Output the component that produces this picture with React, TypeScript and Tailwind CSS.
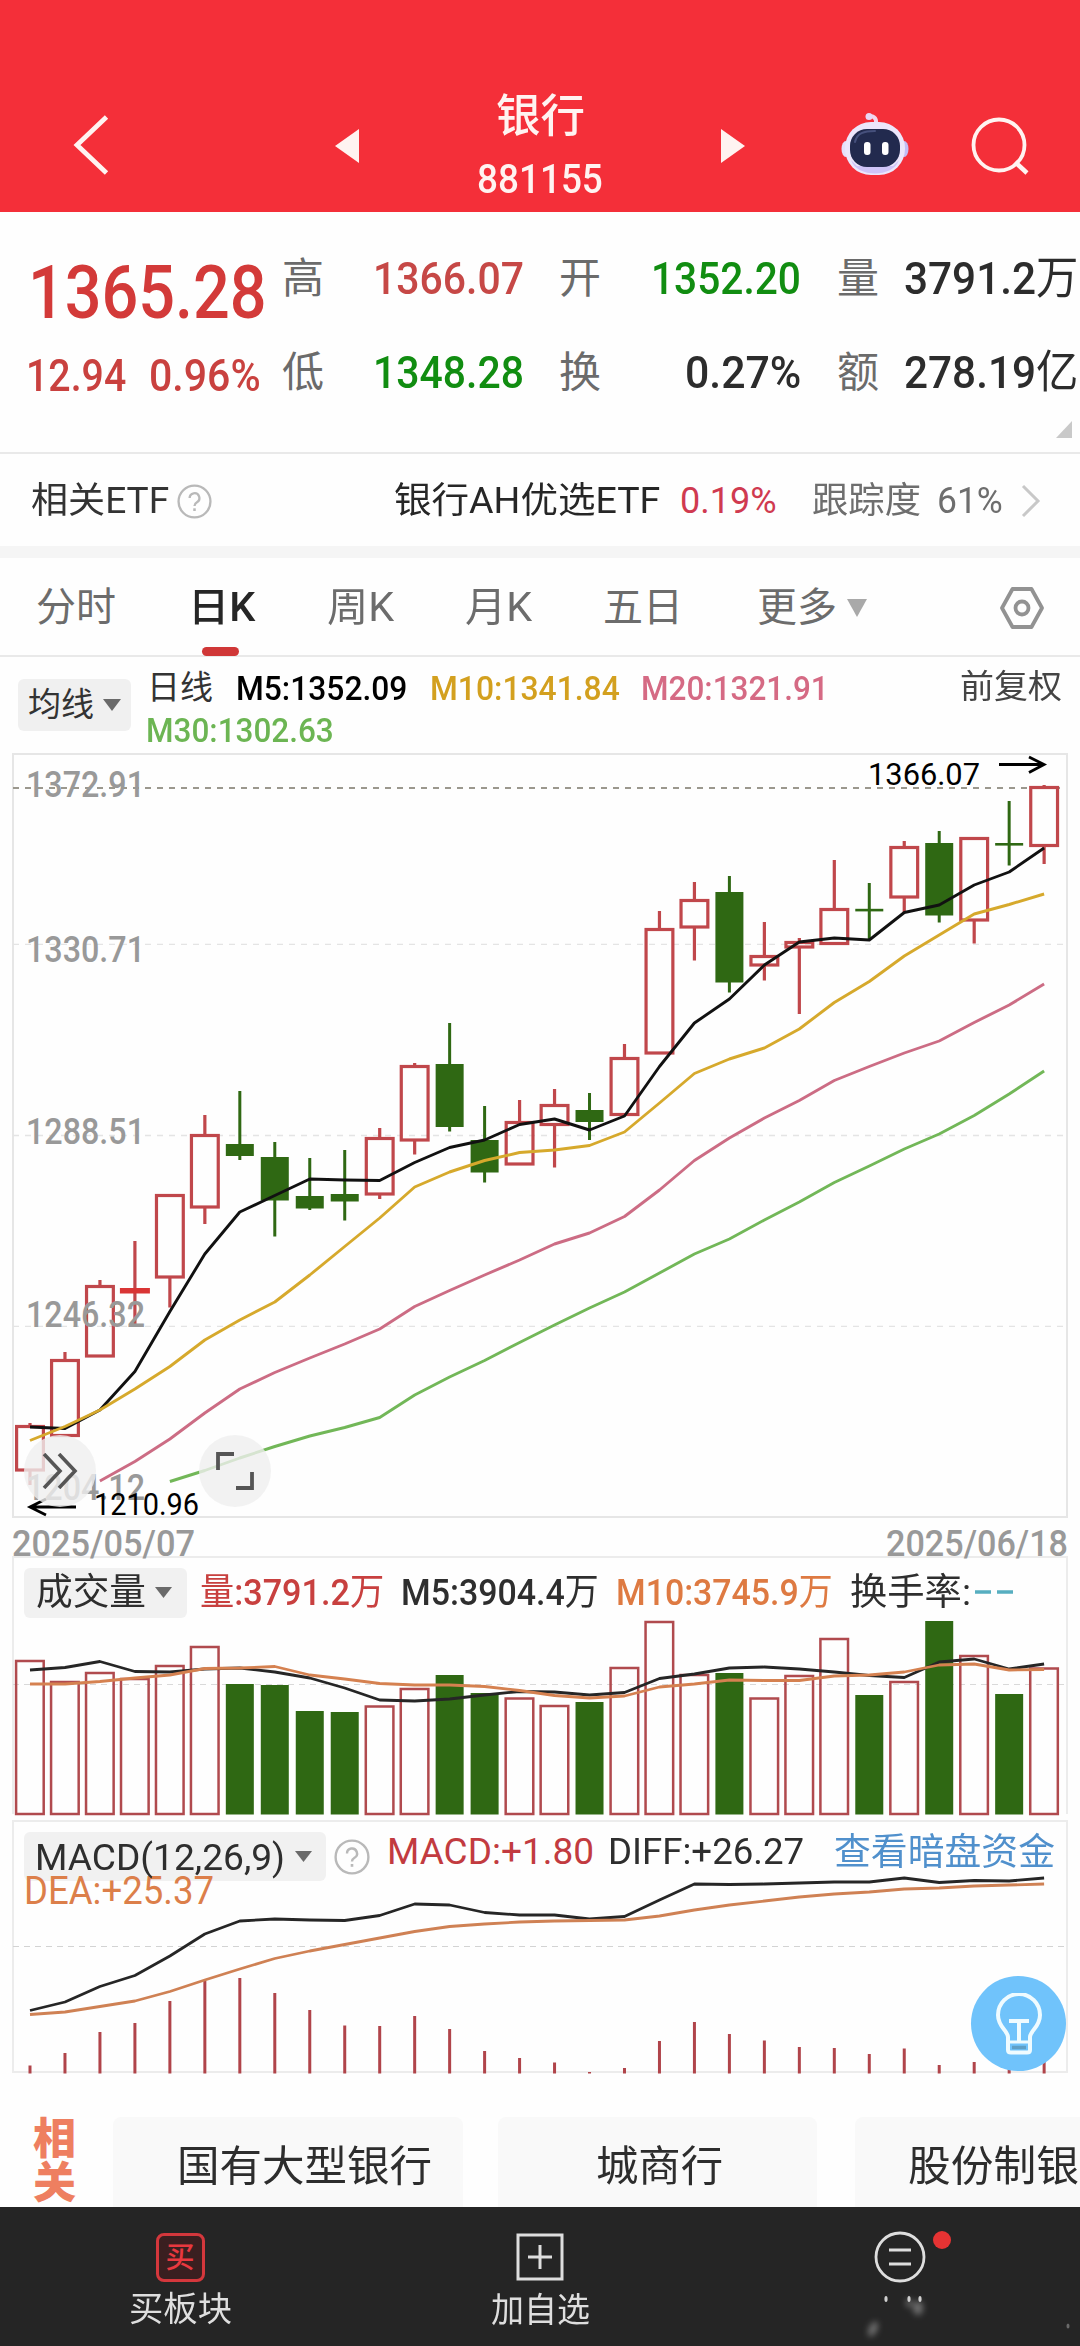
import { useLayoutEffect, useRef, useState } from "react";
import type { ReactNode } from "react";

type Candle = {
  up: boolean;
  top: number;
  bottom: number;
  high: number;
  low: number;
  volume: number;
  macd: number;
};

const RED = "#c0474b";
const GREEN = "#2f6813";
const FONT = 'Roboto, "Noto Sans CJK SC", sans-serif';

// [up, body top, body bottom, high, low, volume top, macd top]
const rows: [number, number, number, number, number, number, number][] = [
  [1, 1425, 1471.5, 1423, 1485, 1660, 2065.5],
  [1, 1359, 1437, 1352, 1437, 1681, 2053],
  [1, 1285, 1357.5, 1280, 1357, 1672, 2032],
  [1, 1288, 1293.5, 1241, 1324, 1678, 2023],
  [1, 1194, 1278.5, 1194, 1307.5, 1665, 2001],
  [1, 1134, 1208.5, 1115, 1224, 1646, 1981],
  [0, 1144, 1156, 1091, 1160, 1684, 1978],
  [0, 1157, 1200.5, 1142, 1236.5, 1685, 1993],
  [0, 1196, 1208.5, 1158, 1210, 1711, 2010],
  [0, 1194, 1201.5, 1150, 1220.5, 1712, 2025.5],
  [1, 1137, 1195.5, 1128, 1199, 1705.5, 2026],
  [1, 1065, 1141.5, 1063, 1154.5, 1688, 2016],
  [0, 1064, 1127, 1023, 1131.5, 1675, 2029],
  [0, 1140, 1172.5, 1106, 1182.5, 1693, 2051],
  [1, 1121, 1165.5, 1100, 1165, 1697.5, 2058],
  [1, 1104, 1126, 1089, 1167.5, 1705, 2062.5],
  [0, 1110, 1122, 1093, 1140, 1702, 2072],
  [1, 1057, 1116, 1044, 1116, 1667, 2068],
  [1, 928, 1054.5, 911, 1054, 1621, 2041],
  [1, 899, 928.5, 882, 960.5, 1674, 2022],
  [0, 892, 982.5, 876, 992.5, 1673, 2034],
  [1, 955, 966.5, 922, 980.5, 1697.5, 2040.5],
  [1, 941, 948.5, 938, 1014, 1675, 2047],
  [1, 908, 945, 860, 945, 1638, 2048],
  [0, 908.8, 911.4, 883, 939, 1695, 2054],
  [1, 846, 898.5, 841, 912.5, 1681, 2048.5],
  [0, 843, 915.5, 831, 922.5, 1621, 2065],
  [1, 837, 921.5, 837, 943.5, 1655, 2062],
  [0, 843, 845.6, 801, 865.5, 1694, 2066],
  [1, 786, 847, 785, 864, 1667.5, 2060.5],
];

const candles: Candle[] = rows.map(([up, top, bottom, high, low, volume, macd]) => ({
  up: up === 1,
  top,
  bottom,
  high,
  low,
  volume,
  macd,
}));

const ma5 = [
  1427, 1428.5, 1410, 1371.5, 1311.5, 1254, 1212, 1195.5, 1179, 1180, 1180.5, 1162.5, 1147.5, 1140, 1124.5,
  1119, 1130, 1116, 1066.5, 1023, 999, 965, 942, 938, 940, 912.5, 905, 885, 872, 848,
];
const ma10 = [
  1440.5, 1426.5, 1410, 1389, 1366.5, 1340, 1320, 1302, 1275, 1246.5, 1218, 1187, 1172, 1160.5, 1152.5,
  1150, 1145.5, 1132, 1103, 1073.5, 1059, 1048, 1029, 1002.5, 981.5, 956, 935, 914, 904.5, 894,
];
const ma20 = [
  1481, 1461.5, 1439, 1413, 1389, 1372.5, 1358, 1344, 1329, 1306.5, 1290.5, 1275, 1260, 1244, 1233,
  1216.5, 1190, 1160.5, 1138, 1118, 1100.5, 1080.5, 1066.5, 1053, 1041, 1022.5, 1005, 984,
];
const ma30 = [
  1481.5, 1470.5, 1458, 1446.5, 1436, 1427.5, 1417.5, 1395, 1377, 1360.5, 1342.5, 1325, 1308, 1292, 1273,
  1254, 1239, 1220, 1202, 1182.5, 1166, 1149, 1134, 1115.5, 1094, 1071,
];
const vol5 = [
  1670, 1667.5, 1661.5, 1671.5, 1672, 1669, 1668, 1672, 1678, 1688, 1700, 1701, 1699, 1695, 1691.5,
  1692, 1695, 1692.5, 1678.5, 1674, 1668, 1667, 1669, 1672, 1675.5, 1677.5, 1662, 1659, 1669, 1664,
];
const vol10 = [
  1684, 1684, 1681.5, 1678, 1675, 1668.5, 1668, 1666.5, 1675, 1679, 1683.5, 1685, 1685, 1686.5, 1690.5,
  1695.5, 1698, 1696, 1687, 1684, 1680, 1680.5, 1680.5, 1676, 1675, 1672, 1665, 1664, 1670, 1669.5,
];
const diff = [
  2010.5, 2002, 1986.5, 1975.5, 1956, 1934, 1921, 1919, 1920, 1920.5, 1915.5, 1904, 1905, 1912.5, 1915,
  1915, 1919, 1916.5, 1900, 1884, 1884.5, 1884, 1883, 1882, 1882, 1878, 1882.5, 1880.5, 1881, 1878,
];
const dea = [
  2014.5, 2012, 2006.5, 2001, 1991.5, 1980, 1969, 1958.5, 1951, 1944.5, 1938, 1931.5, 1926.5, 1924, 1922,
  1921, 1920.5, 1920, 1916, 1910, 1905, 1901, 1897, 1894, 1892, 1889, 1888, 1886, 1885, 1884,
];

const cx = (i: number) => 30 + i * 34.97;

const points = (values: number[], start = 0) =>
  values.map((y, i) => `${cx(i + start).toFixed(1)},${y}`).join(" ");

// Squeezes a label horizontally so it takes exactly `w` pixels
function Fit({ w, className = "", children }: { w: number; className?: string; children: ReactNode }) {
  const ref = useRef<HTMLSpanElement>(null);
  const [scale, setScale] = useState(1);

  useLayoutEffect(() => {
    if (ref.current) setScale(w / ref.current.offsetWidth);
  }, [w]);

  return (
    <span className={`block shrink-0 whitespace-nowrap ${className}`} style={{ width: w }}>
      <span ref={ref} className="inline-block origin-left" style={{ transform: `scaleX(${scale})` }}>
        {children}
      </span>
    </span>
  );
}

function Caret({ className }: { className: string }) {
  return (
    <svg viewBox="0 0 18 12" preserveAspectRatio="none" className={className} fill="currentColor">
      <path d="M0 0H18L9 12Z" />
    </svg>
  );
}

function HelpIcon({ className }: { className: string }) {
  return (
    <svg viewBox="0 0 36 36" className={className} fill="none" stroke="#b9b9b9">
      <circle cx="18" cy="18" r="16.4" strokeWidth="2.4" />
      <path d="M13 14.5a5 5 0 1 1 7.5 4.3c-1.7 1-2.5 1.8-2.5 3.7" strokeWidth="2.4" />
      <path d="M18 25v2.8" strokeWidth="2.6" />
    </svg>
  );
}

function Robot() {
  return (
    <svg viewBox="0 0 68 64" className="h-[64px] w-[68px]">
      <path d="M35 12C36 5 31 3 27 5" fill="none" stroke="#f3d5ea" strokeWidth="4" strokeLinecap="round" />
      <circle cx="28" cy="4.5" r="3.500" fill="#e9d7f5" />
      <ellipse cx="5" cy="37" rx="4.500" ry="8" fill="#e4e0fb" />
      <ellipse cx="63" cy="37" rx="4.500" ry="8" fill="#c3bdf5" />
      <rect x="4" y="10" width="60" height="53" rx="26" fill="#ece6fb" />
      <path d="M10 48c6 18 42 18 48 0l-6 6H16z" fill="#cfc4f8" />
      <rect x="9" y="17" width="50" height="38" rx="17" fill="#222a4e" />
      <path d="M14 30c2-9 9-11 20-11" fill="none" stroke="#46507c" strokeWidth="2" strokeLinecap="round" />
      <rect x="23" y="30" width="6.500" height="13" rx="3" fill="#fff" />
      <rect x="41" y="30" width="6.500" height="13" rx="3" fill="#fff" />
    </svg>
  );
}

function Header() {
  return (
    <header className="flex h-[212px] items-center bg-[#f42f39] pt-[79px] text-[#fff3f1]">
      <svg viewBox="0 0 38 62" className="ml-[71px] h-[62px] w-[38px]" fill="none" stroke="currentColor" strokeWidth="4.8">
        <path d="M35.500 2L6 30L35.500 58" />
      </svg>

      <svg viewBox="0 0 24 34" className="ml-[226px] h-[34px] w-6" fill="currentColor">
        <path d="M24 0V34L0 17Z" />
      </svg>

      <div className="flex h-full w-[362px] flex-col items-center pt-[10px]">
        <Fit w={89} className="h-14 text-[45px] font-medium leading-[56px]">
          银行
        </Fit>
        <Fit w={126} className="mt-[12px] h-11 text-[41px] font-medium leading-[44px]">
          881155
        </Fit>
      </div>

      <svg viewBox="0 0 24 34" className="h-[34px] w-6" fill="currentColor">
        <path d="M0 0V34L24 17Z" />
      </svg>

      <div className="-mt-[3px] ml-[96px]">
        <Robot />
      </div>

      <svg viewBox="0 0 60 60" className="ml-[62px] h-[60px] w-[60px]" fill="none" stroke="currentColor" strokeWidth="3.800">
        <circle cx="28" cy="29" r="25.500" />
        <path d="M44 46L56 57" strokeWidth="4.500" />
      </svg>
    </header>
  );
}

function Quote() {
  const label = "h-12 text-[42px] leading-[48px] text-[#6b6b6b]";
  const value = "h-12 text-[45px] leading-[48px] font-medium";

  return (
    <section className="relative flex h-[242px] border-b-2 border-[#e9e9e9]">
      <div className="w-[282px] shrink-0 pt-[48px] text-[#d33a39]">
        <Fit w={239} className="ml-[28px] h-16 text-[75px] font-medium leading-[64px]">
          1365.28
        </Fit>
        <div className="mt-8 flex text-[#c9413f]">
          <Fit w={100} className="ml-[26px] h-10 text-[44px] font-medium leading-[40px]">
            12.94
          </Fit>
          <Fit w={112} className="ml-[23px] h-10 text-[44px] font-medium leading-[40px]">
            0.96%
          </Fit>
        </div>
      </div>

      <div className="pt-[43px]">
        <div className="flex">
          <Fit w={42} className={label}>高</Fit>
          <Fit w={151} className={`ml-[49px] text-[#c64846] ${value}`}>1366.07</Fit>
          <Fit w={42} className={`ml-[35px] ${label}`}>开</Fit>
          <Fit w={150} className={`ml-[50px] text-[#118d11] ${value}`}>1352.20</Fit>
          <Fit w={42} className={`ml-[36px] ${label}`}>量</Fit>
          <Fit w={174} className={`ml-[25px] text-[#2c2c2c] ${value}`}>
            3791.2<span className="font-normal">万</span>
          </Fit>
        </div>
        <div className="mt-[46px] flex">
          <Fit w={42} className={label}>低</Fit>
          <Fit w={151} className={`ml-[49px] text-[#118d11] ${value}`}>1348.28</Fit>
          <Fit w={42} className={`ml-[35px] ${label}`}>换</Fit>
          <Fit w={116} className={`ml-[84px] text-[#2c2c2c] ${value}`}>0.27%</Fit>
          <Fit w={42} className={`ml-[36px] ${label}`}>额</Fit>
          <Fit w={174} className={`ml-[25px] text-[#2c2c2c] ${value}`}>
            278.19<span className="font-normal">亿</span>
          </Fit>
        </div>
      </div>

      <svg viewBox="0 0 16 17" className="absolute bottom-[14px] right-2 h-[17px] w-4" fill="#c9c9c9">
        <path d="M16 0V17H0Z" />
      </svg>
    </section>
  );
}

function RelatedEtf() {
  return (
    <section className="flex h-[92px] items-center pt-[2px] text-[36px] leading-[44px] text-[#333]">
      <Fit w={138} className="ml-[31px]">相关ETF</Fit>
      <HelpIcon className="ml-[8px] h-[35px] w-[35px]" />
      <Fit w={266} className="ml-[182px] text-[#262626]">银行AH优选ETF</Fit>
      <Fit w={97} className="ml-[20px] text-[#d03a50]">0.19%</Fit>
      <Fit w={109} className="ml-[35px] text-[#6e6e6e]">跟踪度</Fit>
      <Fit w={66} className="ml-[16px] text-[#6e6e6e]">61%</Fit>
      <svg viewBox="0 0 20 34" className="ml-[18px] h-[34px] w-5" fill="none" stroke="#c8c8c8" strokeWidth="3">
        <path d="M2 2L17 17L2 32" />
      </svg>
    </section>
  );
}

function Tabs() {
  return (
    <nav className="relative flex h-[99px] items-center border-b-2 border-[#e9e9e9] pt-[2px] text-[40px] leading-[50px] text-[#6c6c6c]">
      <Fit w={80} className="ml-9">分时</Fit>
      <Fit w={67} className="ml-[72px] font-medium text-[#262626]">日K</Fit>
      <Fit w={67} className="ml-[72px]">周K</Fit>
      <Fit w={67} className="ml-[71px]">月K</Fit>
      <Fit w={80} className="ml-[71px]">五日</Fit>
      <Fit w={80} className="ml-[74px]">更多</Fit>
      <Caret className="ml-[10px] h-[18px] w-5 text-[#a9a9a9]" />
      <svg viewBox="0 0 44 42" className="ml-[133px] h-[42px] w-11" fill="none" stroke="#929292" strokeWidth="3.800">
        <path d="M12.500 2H31.500L42 21L31.500 40H12.500L2 21Z" strokeLinejoin="round" />
        <circle cx="22" cy="21" r="6.500" />
      </svg>
      <span className="absolute bottom-[-1px] left-[202px] h-[9px] w-[37px] rounded-full bg-[#d03737]" />
    </nav>
  );
}

function MaLegend() {
  return (
    <section className="flex h-[96px] text-[34px] font-medium leading-[34px]">
      <div className="ml-[18px] mt-[22px] flex h-[52px] w-[113px] items-center rounded-md bg-[#f0f0f0] text-[#333]">
        <Fit w={66} className="ml-[10px] text-[33px] font-normal">均线</Fit>
        <Caret className="ml-[9px] h-[12px] w-[18px] text-[#6a6a6a]" />
      </div>
      <div className="ml-[16px] flex w-[801px] flex-col pt-[14px]">
        <div className="flex">
          <Fit w={66} className="text-[33px] font-normal text-[#333]">日线</Fit>
          <Fit w={171} className="ml-[23px] text-black">M5:1352.09</Fit>
          <Fit w={190} className="ml-[23px] text-[#d3a01f]">M10:1341.84</Fit>
          <Fit w={188} className="ml-[21px] text-[#d56a84]">M20:1321.91</Fit>
        </div>
        <Fit w={188} className="mt-[8px] -ml-[1px] text-[#6cb553]">M30:1302.63</Fit>
      </div>
      <Fit w={102} className="ml-[12px] pt-[13px] text-[33px] font-normal text-[#444]">前复权</Fit>
    </section>
  );
}

function AxisText({ x, y, w, children }: { x: number; y: number; w: number; children: string }) {
  return (
    <text
      x={x}
      y={y}
      textLength={w}
      lengthAdjust="spacingAndGlyphs"
      fontFamily={FONT}
      fontSize="36.5"
      fontWeight="500"
      fill="#999"
    >
      {children}
    </text>
  );
}

function CandleShape({ c, i }: { c: Candle; i: number }) {
  const x = cx(i);
  if (!c.up) {
    return (
      <g fill={GREEN}>
        <rect x={x - 1.5} y={c.high} width="3" height={c.low - c.high} />
        <rect x={x - 14} y={c.top} width="28" height={c.bottom - c.top} />
      </g>
    );
  }
  return (
    <g>
      <path
        d={`M${x} ${c.high}V${c.top + 1}M${x} ${c.bottom - 1}V${c.low}`}
        stroke={RED}
        strokeWidth="3.2"
      />
      {c.bottom - c.top < 6 ? (
        <rect x={x - 15} y={c.top} width="30" height={c.bottom - c.top} fill="#d93535" />
      ) : (
        <rect
          x={x - 13.4}
          y={c.top + 1.5}
          width="26.8"
          height={c.bottom - c.top - 3}
          fill="none"
          stroke={RED}
          strokeWidth="3.2"
        />
      )}
    </g>
  );
}

function KLineChart() {
  return (
    <div className="relative h-[803px]">
      <svg viewBox="0 753 1080 803" className="block h-[803px] w-full overflow-visible" fill="none">
        <rect x="13" y="754" width="1054" height="763" stroke="#e6e6e6" strokeWidth="2" />
        <g stroke="#e4e4e4" strokeWidth="1.300" strokeDasharray="6 6">
          <path d="M13 944.300H1067M13 1135.500H1067M13 1326.300H1067" />
        </g>
        <path d="M13 788H1060" stroke="#9b988e" strokeWidth="1.800" strokeDasharray="6 6" />

        {candles.map((c, i) => (
          <CandleShape key={i} c={c} i={i} />
        ))}

        <AxisText x={26} y={797} w={119}>1372.91</AxisText>
        <AxisText x={26} y={962} w={119}>1330.71</AxisText>
        <AxisText x={26} y={1144} w={119}>1288.51</AxisText>
        <AxisText x={26} y={1327} w={119}>1246.32</AxisText>
        <AxisText x={26} y={1500} w={119}>1204.12</AxisText>
        <AxisText x={12} y={1556} w={183}>2025/05/07</AxisText>
        <AxisText x={886} y={1556} w={182}>2025/06/18</AxisText>

        <g strokeWidth="2.900" strokeLinejoin="round">
          <polyline points={points(ma30, 4)} stroke="#72b758" />
          <polyline points={points(ma20, 2)} stroke="#cc6c84" />
          <polyline points={points(ma5)} stroke="#111" />
          <polyline points={points(ma10)} stroke="#d6a92c" />
        </g>

        <g fontFamily={FONT} fontSize="32" fill="#000">
          <text x="868" y="784.500" textLength="112" lengthAdjust="spacingAndGlyphs">1366.07</text>
          <text x="94" y="1515" textLength="105" lengthAdjust="spacingAndGlyphs">1210.96</text>
        </g>
        <path d="M999 764.500H1044M1029 757L1044 764.500L1029 772.500" stroke="#000" strokeWidth="2.800" />
        <path d="M76 1507H30M46 1499L30 1507L46 1515" stroke="#000" strokeWidth="2.800" />
      </svg>

      <button className="absolute left-[24px] top-[682px] flex h-[72px] w-[72px] items-center justify-center rounded-full bg-[#efefef]/80">
        <svg viewBox="0 0 36 36" className="h-9 w-9" fill="none" stroke="#555" strokeWidth="3.600">
          <path d="M2 1L18 18L2 35M17 1L33 18L17 35" />
        </svg>
      </button>
      <button className="absolute left-[199px] top-[682px] flex h-[72px] w-[72px] items-center justify-center rounded-full bg-[#efefef]/80">
        <svg viewBox="0 0 38 38" className="h-[38px] w-[38px]" fill="none" stroke="#555" strokeWidth="3.800">
          <path d="M2 18V2H18M36 20V36H20" />
        </svg>
      </button>
    </div>
  );
}

function VolumePanel() {
  return (
    <section className="h-[264px]">
      <div className="mx-[12px] flex h-[62px] items-center border-x-2 border-t-2 border-[#ececec] text-[37px] font-medium leading-[44px] text-[#2e2e2e]">
        <div className="ml-[10px] mt-[9px] flex h-[50px] w-[163px] items-center rounded-md bg-[#f1f1f1]">
          <Fit w={110} className="ml-[12px] font-normal">成交量</Fit>
          <Caret className="ml-[9px] h-[11px] w-[17px] text-[#6a6a6a]" />
        </div>
        <Fit w={184} className="ml-[13px] mt-[9px] text-[#c8403f]">
          <span className="font-normal">量</span>:3791.2<span className="font-normal">万</span>
        </Fit>
        <Fit w={198} className="ml-[17px] mt-[9px]">
          M5:3904.4<span className="font-normal">万</span>
        </Fit>
        <Fit w={217} className="ml-[17px] mt-[9px] text-[#de7a42]">
          M10:3745.9<span className="font-normal">万</span>
        </Fit>
        <Fit w={121} className="ml-[17px] mt-[9px] font-normal">换手率:</Fit>
        <svg viewBox="0 0 38 4" className="ml-[4px] mt-[8px] h-1 w-[38px]" stroke="#57aec0" strokeWidth="3.600">
          <path d="M0 2H16M22 2H38" />
        </svg>
      </div>
      <svg viewBox="0 1618 1080 202" className="block h-[202px] w-full" fill="none">
        <path d="M13 1618V1814M1067 1618V1814" stroke="#ececec" strokeWidth="2" />
        <path d="M13 1684.500H1067" stroke="#d9d9d9" strokeWidth="1.200" strokeDasharray="6 5" />
        {candles.map((c, i) =>
          c.up ? (
            <rect
              key={i}
              x={cx(i) - 13.9}
              y={c.volume + 1}
              width="27.6"
              height={1813 - c.volume}
              stroke="#b04a4e"
              strokeWidth="2.5"
            />
          ) : (
            <rect key={i} x={cx(i) - 14} y={c.volume} width="28" height={1814.5 - c.volume} fill={GREEN} />
          )
        )}
        <g strokeWidth="2.800" strokeLinejoin="round">
          <polyline points={points(vol5)} stroke="#262626" />
          <polyline points={points(vol10)} stroke="#d58150" />
        </g>
      </svg>
    </section>
  );
}

function MacdPanel() {
  return (
    <section className="relative h-[254px]">
      <div className="mx-[12px] flex h-[56px] border-x-2 border-t-2 border-[#ececec] text-[37px] leading-[44px] text-[#2e2e2e]">
        <div className="ml-[10px] mt-[10px] flex h-[49px] w-[302px] items-center rounded-md bg-[#f1f1f1]">
          <Fit w={250} className="ml-[11px] pt-[2px]">MACD(12,26,9)</Fit>
          <Caret className="ml-[10px] h-[11px] w-[17px] text-[#6a6a6a]" />
        </div>
        <HelpIcon className="ml-[8px] mt-[17px] h-9 w-9" />
        <Fit w={207} className="ml-[17px] mt-[8px] text-[#c23b40]">MACD:+1.80</Fit>
        <Fit w={196} className="ml-[14px] mt-[8px]">DIFF:+26.27</Fit>
        <Fit w={221} className="ml-[30px] mt-[9px] text-[#5090cc]">查看暗盘资金</Fit>
      </div>
      <svg viewBox="0 1876 1080 198" className="block h-[198px] w-full overflow-visible" fill="none">
        <path d="M13 1876V2072H1067V1876" stroke="#ececec" strokeWidth="2" />
        <path d="M13 1946.500H1067" stroke="#d3d3d3" strokeWidth="1.200" strokeDasharray="6 5" />
        <text
          x="24"
          y="1904"
          textLength="190"
          lengthAdjust="spacingAndGlyphs"
          fontFamily={FONT}
          fontSize="38"
          fill="#dc7f4a"
        >
          DEA:+25.37
        </text>
        <g fill="#b0444a">
          {candles.map((c, i) => (
            <rect key={i} x={cx(i) - 1.5} y={c.macd} width="3" height={2073.5 - c.macd} />
          ))}
        </g>
        <g strokeWidth="2.800" strokeLinejoin="round">
          <polyline points={points(diff)} stroke="#262626" />
          <polyline points={points(dea)} stroke="#cf8154" />
        </g>
      </svg>

      <button className="absolute left-[971px] top-[156px] flex h-[95px] w-[95px] items-center justify-center rounded-full bg-[#70c3fb]">
        <svg viewBox="0 0 46 62" className="h-[62px] w-[46px]" fill="none" stroke="#effbff" strokeWidth="4" strokeLinejoin="round">
          <path d="M12 44C12 38 2 34 2 22A21 21 0 0 1 44 22C44 34 34 38 34 44V57Q34 59.500 31 59.500H15Q12 59.500 12 57Z" />
          <path d="M13 28H33M23 28V49" />
          <path d="M12 49H34" strokeWidth="3" />
          <path d="M16 54.500H30" stroke="#5f9fc6" strokeWidth="3.500" />
        </svg>
      </button>
    </section>
  );
}

function RelatedBoards() {
  const card = "flex h-[90px] shrink-0 items-center rounded-t-lg bg-[#f9f9f9] pt-[10px]";

  return (
    <section className="flex h-[133px] items-end overflow-hidden text-[42px] leading-[50px] text-[#2d2d2d]">
      <div className="ml-[33px] h-[90px] w-[46px] shrink-0 text-[43px] font-black leading-[44px] text-[#ee7f60]">
        <p>相</p>
        <p>关</p>
      </div>
      <div className={`ml-[34px] w-[350px] ${card}`}>
        <Fit w={255} className="ml-[64px]">国有大型银行</Fit>
      </div>
      <div className={`ml-[35px] w-[319px] ${card}`}>
        <Fit w={127} className="ml-[98px]">城商行</Fit>
      </div>
      <div className={`ml-[38px] w-[240px] ${card}`}>
        <Fit w={171} className="ml-[53px]">股份制银</Fit>
      </div>
    </section>
  );
}

function BottomBar() {
  return (
    <footer className="grid h-[139px] grid-cols-3 bg-[#252525] text-[34px] leading-[40px] text-[#dedede]">
      <div className="flex flex-col items-center pt-[26px]">
        <div className="flex h-[49px] w-[49px] items-center justify-center rounded-lg border-[3px] border-[#d4373c] bg-[#3a1f20] text-[29px] font-medium text-[#e8383f]">
          买
        </div>
        <Fit w={103} className="mt-[7px] h-10">买板块</Fit>
      </div>
      <div className="flex flex-col items-center pt-[26px]">
        <svg viewBox="0 0 48 48" className="h-12 w-12" fill="none" stroke="currentColor" strokeWidth="3">
          <path d="M2 2H46V46H2ZM24 12V36M12 24H36" />
        </svg>
        <Fit w={99} className="mt-[9px] h-10">加自选</Fit>
      </div>
      <div className="relative flex flex-col items-center pt-[23px]">
        <svg viewBox="0 0 54 54" className="h-[54px] w-[54px]" fill="none" stroke="currentColor" strokeWidth="2.800">
          <circle cx="27" cy="27" r="24" />
          <path d="M16 20H38M16 34H38" />
        </svg>
        <span className="absolute left-[213px] top-[24px] h-[18px] w-[18px] rounded-full bg-[#e63333]" />
        {/* faded-out caption under the menu icon */}
        <svg viewBox="0 0 220 60" className="absolute left-[140px] top-[84px] h-[60px] w-[220px]" fill="#d0d0d0">
          <ellipse cx="26" cy="8" rx="1.600" ry="3" />
          <ellipse cx="49" cy="8" rx="1.600" ry="3" />
          <ellipse cx="60" cy="8" rx="1.600" ry="3" />
          <g className="blur-[3px]" opacity=".45">
            <ellipse cx="58" cy="17" rx="5" ry="7" />
            <ellipse cx="49" cy="12" rx="3" ry="4" />
            <ellipse cx="13" cy="38" rx="4" ry="8" transform="rotate(25 13 38)" />
          </g>
          <ellipse cx="208" cy="35" rx="1.500" ry="2.500" opacity=".4" />
        </svg>
      </div>
    </footer>
  );
}

export default function App() {
  return (
    <div className='flex h-[2346px] w-[1080px] flex-col overflow-hidden bg-[#fefefe] font-[Roboto,"Noto_Sans_CJK_SC",sans-serif]'>
      <Header />
      <Quote />
      <RelatedEtf />
      <div className="h-3 bg-[#f5f5f5]" />
      <Tabs />
      <MaLegend />
      <KLineChart />
      <VolumePanel />
      <MacdPanel />
      <RelatedBoards />
      <BottomBar />
    </div>
  );
}
